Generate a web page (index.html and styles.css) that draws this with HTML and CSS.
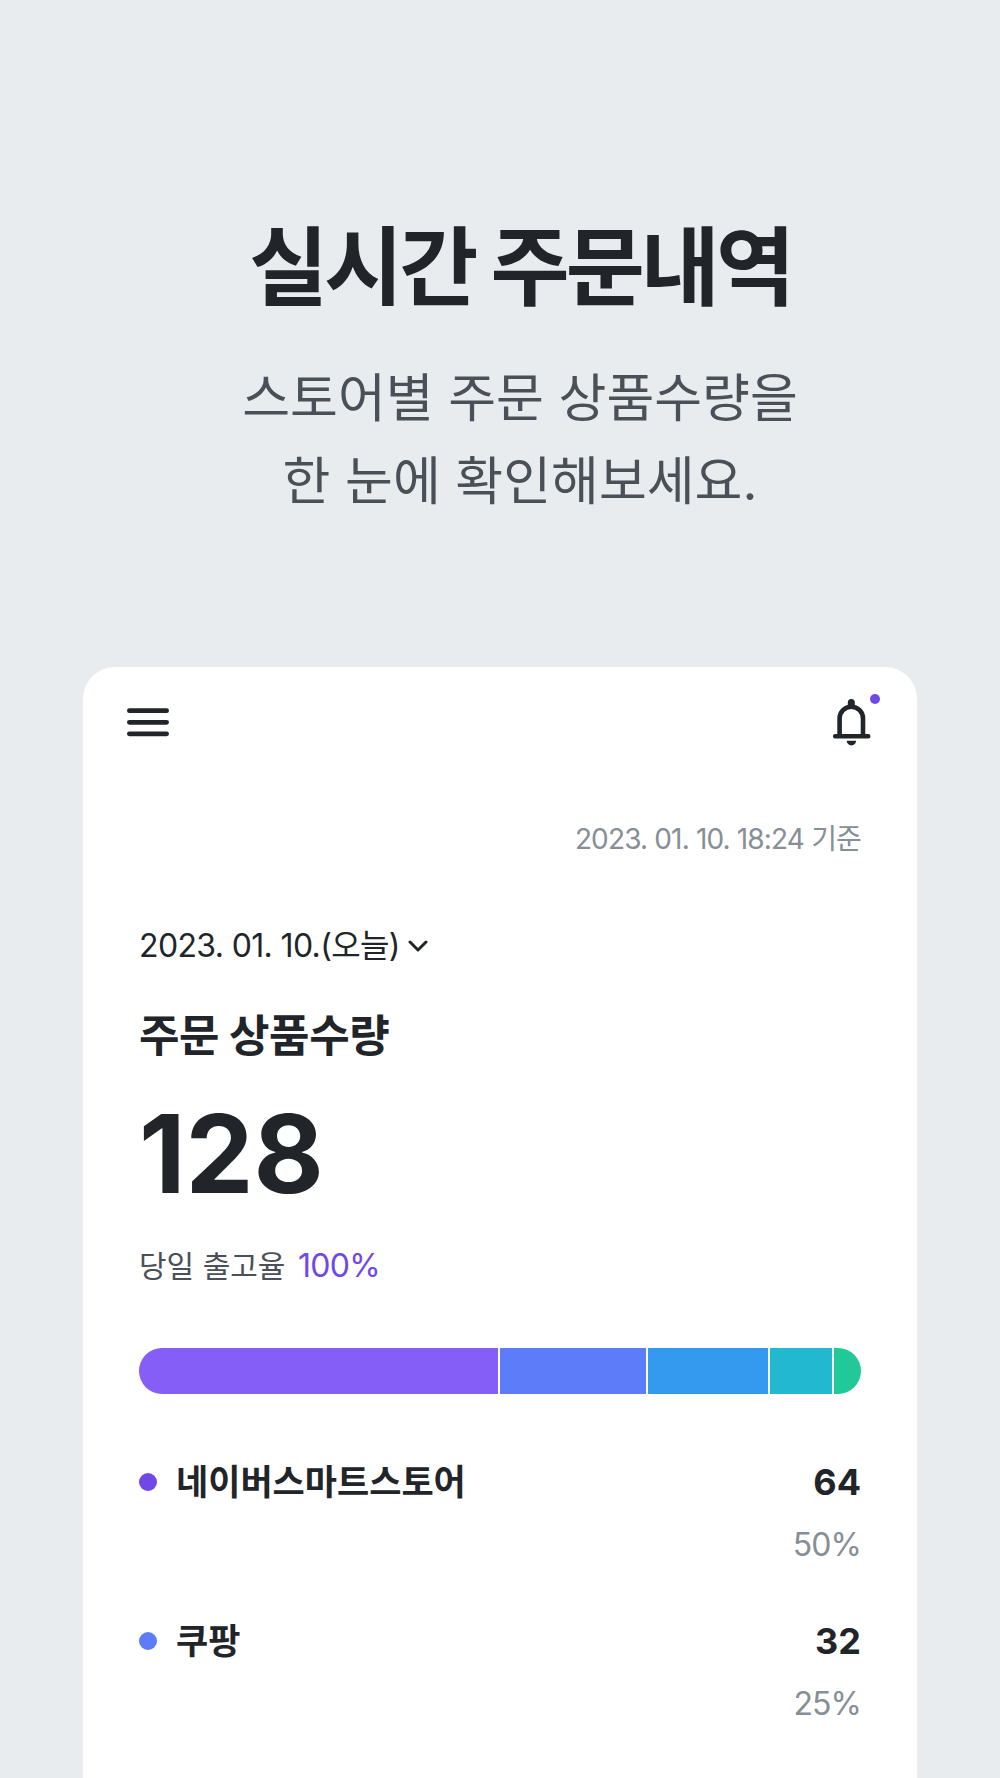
FILE: index.html
```html
<!DOCTYPE html>
<html lang="ko">
<head>
<meta charset="utf-8">
<meta name="viewport" content="width=device-width, initial-scale=1">
<title>실시간 주문내역</title>
<link rel="stylesheet" href="styles.css">
</head>
<body>
<header class="intro">
  <h1 class="intro-title">실시간 주문내역</h1>
  <p class="intro-text">스토어별 주문 상품수량을<br>한 눈에 확인해보세요.</p>
</header>
<main class="card">
  <nav class="topbar">
    <button class="icon-button" type="button" aria-label="메뉴">
      <svg width="44" height="32" viewBox="0 0 44 32" fill="none" stroke="currentColor" stroke-width="4.8" stroke-linecap="round"><path d="M3.4 4.7h37.2M3.4 16.3h37.2M3.4 27.8h37.2"/></svg>
    </button>
    <button class="icon-button" type="button" aria-label="알림">
      <svg width="40" height="48" viewBox="0 0 40 48"><path d="M8.6 38V20.5a11.7 11.7 0 0 1 23.4 0V38M4.2 38.3h33" fill="none" stroke="currentColor" stroke-width="4.6" stroke-linecap="round"/><path d="M16.8 8V4.6a3.5 3.5 0 0 1 7 0V8z" fill="currentColor"/><path d="M15.7 42.8h9.4a4.7 4.7 0 0 1-9.4 0z" fill="currentColor"/></svg>
      <span class="bell-dot"></span>
    </button>
  </nav>
  <div class="content">
    <p class="updated">2023. 01. 10. 18:24 기준</p>
    <button class="date-button" type="button">2023. 01. 10.(오늘)
      <svg width="20" height="12" viewBox="0 0 20 12" fill="none" stroke="currentColor" stroke-width="3" stroke-linecap="round" stroke-linejoin="round"><path d="M2 2l8 8 8-8"/></svg>
    </button>
    <h2 class="section-title">주문 상품수량</h2>
    <p class="total">128</p>
    <p class="rate">당일 출고율 <span class="rate-value">100%</span></p>
    <div class="bar">
      <span class="violet" style="flex-grow:359"></span>
      <span class="indigo" style="flex-grow:146"></span>
      <span class="blue" style="flex-grow:120"></span>
      <span class="cyan" style="flex-grow:62"></span>
      <span class="green" style="flex-grow:27"></span>
    </div>
    <ul class="stores">
      <li class="store"><span class="dot dot-violet"></span><span class="store-name">네이버스마트스토어</span><span class="store-count">64</span><span class="store-share">50%</span></li>
      <li class="store"><span class="dot indigo"></span><span class="store-name">쿠팡</span><span class="store-count">32</span><span class="store-share">25%</span></li>
    </ul>
  </div>
</main>
</body>
</html>
```
FILE: styles.css
```css
* { box-sizing: border-box; }
body {
  margin: 0;
  min-height: 100vh;
  display: flex;
  flex-direction: column;
  background: #e9ecef;
  color: #212529;
  font-family: Inter, "Noto Sans CJK KR", sans-serif;
}
h1, h2, p, ul { margin: 0; padding: 0; }
button { padding: 0; border: 0; background: none; color: inherit; font: inherit; cursor: pointer; }
svg { display: block; }
.intro { padding: 208px 0 0 40px; text-align: center; }
.intro-title { font-size: 86px; line-height: 120px; font-weight: 700; letter-spacing: -4px; }
.intro-text { margin-top: 29px; font-size: 52px; line-height: 83px; color: #495057; }
.card {
  flex: 1;
  margin: 144px 83px 0;
  background: #fff;
  border-radius: 32px 32px 0 0;
}
.topbar { display: flex; justify-content: space-between; align-items: center; padding: 31px 46px 0 43px; }
.icon-button { position: relative; }
.bell-dot { position: absolute; top: -4px; right: -9px; width: 10px; height: 10px; border-radius: 50%; background: #7048e8; }
.content { display: flex; flex-direction: column; align-items: stretch; padding: 73px 56px 24px; }
.updated { font-size: 28px; line-height: 40px; text-align: right; color: #868e96; letter-spacing: -0.03em; }
.date-button { display: flex; align-items: center; align-self: flex-start; gap: 8px; margin-top: 65px; font-size: 32px; line-height: 44px; letter-spacing: -0.02em; }
.section-title { margin-top: 36px; font-size: 44px; line-height: 64px; font-weight: 700; letter-spacing: -0.01em; }
.total { margin-top: 18px; font-size: 108px; line-height: 136px; font-weight: 700; }
.rate { margin-top: 22px; font-size: 30px; line-height: 44px; color: #495057; }
.rate-value { margin-left: 4px; font-size: 32px; letter-spacing: -0.02em; color: #7048e8; }
.bar { display: flex; gap: 2px; height: 46px; margin-top: 60px; border-radius: 23px; overflow: hidden; }
.violet { background: #845ef7; }
.indigo { background: #5c7cfa; }
.blue { background: #339af0; }
.cyan { background: #22b8cf; }
.green { background: #20c997; }
.dot-violet { background: #7048e8; }
.stores { display: grid; gap: 48px; margin-top: 62px; list-style: none; }
.store { display: grid; grid-template-columns: 18px 1fr auto; column-gap: 19px; row-gap: 15px; align-items: center; }
.dot { width: 18px; height: 18px; border-radius: 50%; }
.store-name { font-size: 35px; line-height: 52px; font-weight: 700; }
.store-count { font-size: 36px; line-height: 52px; font-weight: 700; text-align: right; }
.store-share { grid-column: 2 / 4; font-size: 32px; line-height: 44px; letter-spacing: -0.03em; text-align: right; color: #868e96; }
```
